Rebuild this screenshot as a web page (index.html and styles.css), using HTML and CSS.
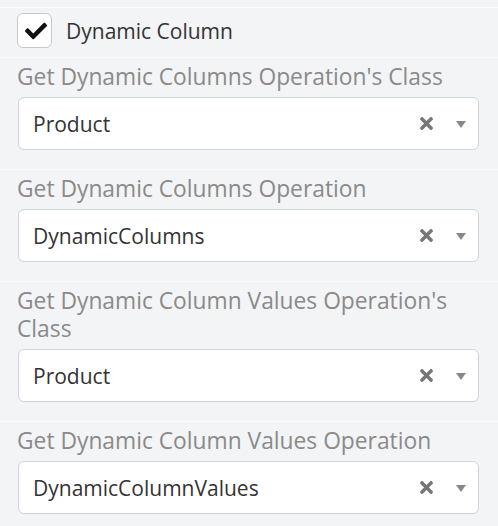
FILE: index.html
```html
<!DOCTYPE html>
<html lang="en">
<head>
	<meta charset="UTF-8">
	<title>Dynamic Column</title>
	<link rel="stylesheet" href="styles.css">
</head>
<body>
	<div class="panel">
		<div class="section section-top"></div>

		<div class="section check-row">
			<span class="checkbox">
				<svg width="22" height="22" viewBox="0 0 512 512"><path fill="#111" d="M173.898 439.404l-166.4-166.4c-9.997-9.997-9.997-26.206 0-36.204l36.203-36.204c9.997-9.998 26.207-9.998 36.204 0L192 312.69 432.095 72.596c9.997-9.997 26.207-9.997 36.204 0l36.203 36.204c9.997 9.997 9.997 26.206 0 36.204l-294.4 294.401c-9.998 9.997-26.207 9.997-36.204-.001z"/></svg>
			</span>
			<span class="check-label">Dynamic Column</span>
		</div>

		<div class="section">
			<div class="field-label">Get Dynamic Columns Operation's Class</div>
			<div class="select">
				<span class="select-value">Product</span>
				<span class="select-clear">
					<svg width="13" height="19" viewBox="0 0 352 512"><path d="M242.72 256l100.07-100.07c12.28-12.28 12.28-32.19 0-44.48l-22.24-22.24c-12.28-12.28-32.19-12.28-44.48 0L176 189.28 75.93 89.21c-12.28-12.28-32.19-12.28-44.48 0L9.21 111.45c-12.28 12.28-12.28 32.19 0 44.48L109.28 256 9.21 356.07c-12.28 12.28-12.28 32.19 0 44.48l22.24 22.24c12.28 12.28 32.2 12.28 44.48 0L176 322.72l100.07 100.07c12.28 12.28 32.2 12.28 44.48 0l22.24-22.24c12.28-12.28 12.28-32.19 0-44.48L242.72 256z"/></svg>
				</span>
				<span class="select-arrow"></span>
			</div>
		</div>

		<div class="section">
			<div class="field-label">Get Dynamic Columns Operation</div>
			<div class="select">
				<span class="select-value">DynamicColumns</span>
				<span class="select-clear">
					<svg width="13" height="19" viewBox="0 0 352 512"><path d="M242.72 256l100.07-100.07c12.28-12.28 12.28-32.19 0-44.48l-22.24-22.24c-12.28-12.28-32.19-12.28-44.48 0L176 189.28 75.93 89.21c-12.28-12.28-32.19-12.28-44.48 0L9.21 111.45c-12.28 12.28-12.28 32.19 0 44.48L109.28 256 9.21 356.07c-12.28 12.28-12.28 32.19 0 44.48l22.24 22.24c12.28 12.28 32.2 12.28 44.48 0L176 322.72l100.07 100.07c12.28 12.28 32.2 12.28 44.48 0l22.24-22.24c12.28-12.28 12.28-32.19 0-44.48L242.72 256z"/></svg>
				</span>
				<span class="select-arrow"></span>
			</div>
		</div>

		<div class="section">
			<div class="field-label">Get Dynamic Column Values Operation's Class</div>
			<div class="select">
				<span class="select-value">Product</span>
				<span class="select-clear">
					<svg width="13" height="19" viewBox="0 0 352 512"><path d="M242.72 256l100.07-100.07c12.28-12.28 12.28-32.19 0-44.48l-22.24-22.24c-12.28-12.28-32.19-12.28-44.48 0L176 189.28 75.93 89.21c-12.28-12.28-32.19-12.28-44.48 0L9.21 111.45c-12.28 12.28-12.28 32.19 0 44.48L109.28 256 9.21 356.07c-12.28 12.28-12.28 32.19 0 44.48l22.24 22.24c12.28 12.28 32.2 12.28 44.48 0L176 322.72l100.07 100.07c12.28 12.28 32.2 12.28 44.48 0l22.24-22.24c12.28-12.28 12.28-32.19 0-44.48L242.72 256z"/></svg>
				</span>
				<span class="select-arrow"></span>
			</div>
		</div>

		<div class="section">
			<div class="field-label">Get Dynamic Column Values Operation</div>
			<div class="select">
				<span class="select-value">DynamicColumnValues</span>
				<span class="select-clear">
					<svg width="13" height="19" viewBox="0 0 352 512"><path d="M242.72 256l100.07-100.07c12.28-12.28 12.28-32.19 0-44.48l-22.24-22.24c-12.28-12.28-32.19-12.28-44.48 0L176 189.28 75.93 89.21c-12.28-12.28-32.19-12.28-44.48 0L9.21 111.45c-12.28 12.28-12.28 32.19 0 44.48L109.28 256 9.21 356.07c-12.28 12.28-12.28 32.19 0 44.48l22.24 22.24c12.28 12.28 32.2 12.28 44.48 0L176 322.72l100.07 100.07c12.28 12.28 32.2 12.28 44.48 0l22.24-22.24c12.28-12.28 12.28-32.19 0-44.48L242.72 256z"/></svg>
				</span>
				<span class="select-arrow"></span>
			</div>
		</div>
	</div>
</body>
</html>
```

FILE: styles.css
```css
html, body {
	margin: 0;
	padding: 0;
	background: #f3f4f6;
}
body {
	font-family: "Open Sans", "Liberation Sans", sans-serif;
	font-size: 21px;
	color: #333;
}
.panel {
	width: 498px;
}
.section {
	border-top: 1px solid #fafbfc;
	padding: 5px 19px 19px 18px;
}
.section-top {
	border-top: 0;
	height: 7px;
	padding: 0;
}
.check-row {
	display: flex;
	align-items: center;
	padding: 5px 18px 9px 17px;
}
.checkbox {
	box-sizing: border-box;
	width: 35px;
	height: 35px;
	border: 1px solid #c8c8c8;
	border-radius: 6px;
	background: #fff;
	display: flex;
	align-items: center;
	justify-content: center;
	padding-left: 2px;
}
.check-label {
	margin-left: 14px;
	line-height: 28px;
}
.field-label {
	color: #8a8a8a;
	font-size: 22.8px;
	line-height: 28px;
	margin-left: -1px;
	margin-bottom: 6px;
}
.select {
	box-sizing: border-box;
	height: 53px;
	background: #fff;
	border: 1px solid #cdd4dc;
	border-radius: 6px;
	display: flex;
	align-items: center;
	padding: 0 12px 0 14px;
}
.select-value {
	flex: 1;
}
.select-clear {
	display: flex;
	align-items: center;
	fill: #777;
	margin-right: 23px;
}
.select-arrow {
	width: 0;
	height: 0;
	border-left: 5px solid transparent;
	border-right: 5px solid transparent;
	border-top: 7px solid #888;
	margin-top: 2px;
}
```
